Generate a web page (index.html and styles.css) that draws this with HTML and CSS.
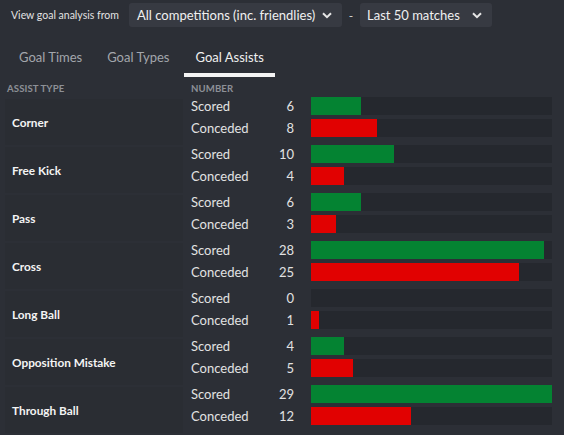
FILE: index.html
```html
<!DOCTYPE html>
<html>
<head>
<meta charset="utf-8">
<link rel="stylesheet" href="styles.css">
</head>
<body>
<div class="topbar">
  <span class="view-label">View goal analysis from</span>
  <div class="dropdown dd-comp">
    <span>All competitions (inc. friendlies)</span>
    <svg class="chev" viewBox="0 0 10 7" width="10" height="7"><path d="M1 1.2 L5 5.2 L9 1.2" fill="none" stroke="#e6e6e6" stroke-width="2"/></svg>
  </div>
  <span class="dash">-</span>
  <div class="dropdown dd-range">
    <span>Last 50 matches</span>
    <svg class="chev" viewBox="0 0 10 7" width="10" height="7"><path d="M1 1.2 L5 5.2 L9 1.2" fill="none" stroke="#e6e6e6" stroke-width="2"/></svg>
  </div>
</div>

<div class="tabs">
  <div class="tab">Goal Times</div>
  <div class="tab">Goal Types</div>
  <div class="tab active">Goal Assists</div>
</div>

<div class="table">
  <div class="thead">
    <div class="th th-type">ASSIST TYPE</div>
    <div class="th th-num">NUMBER</div>
  </div>

  <div class="group">
    <div class="gname">Corner</div>
    <div class="rname r1">Scored</div><div class="rnum r1">6</div><div class="track r1"><div class="bar green" style="width:50px"></div></div>
    <div class="rname r2">Conceded</div><div class="rnum r2">8</div><div class="track r2"><div class="bar red" style="width:66px"></div></div>
  </div>
  <div class="group">
    <div class="gname">Free Kick</div>
    <div class="rname r1">Scored</div><div class="rnum r1">10</div><div class="track r1"><div class="bar green" style="width:83px"></div></div>
    <div class="rname r2">Conceded</div><div class="rnum r2">4</div><div class="track r2"><div class="bar red" style="width:33px"></div></div>
  </div>
  <div class="group">
    <div class="gname">Pass</div>
    <div class="rname r1">Scored</div><div class="rnum r1">6</div><div class="track r1"><div class="bar green" style="width:50px"></div></div>
    <div class="rname r2">Conceded</div><div class="rnum r2">3</div><div class="track r2"><div class="bar red" style="width:25px"></div></div>
  </div>
  <div class="group">
    <div class="gname">Cross</div>
    <div class="rname r1">Scored</div><div class="rnum r1">28</div><div class="track r1"><div class="bar green" style="width:233px"></div></div>
    <div class="rname r2">Conceded</div><div class="rnum r2">25</div><div class="track r2"><div class="bar red" style="width:208px"></div></div>
  </div>
  <div class="group">
    <div class="gname">Long Ball</div>
    <div class="rname r1">Scored</div><div class="rnum r1">0</div><div class="track r1"></div>
    <div class="rname r2">Conceded</div><div class="rnum r2">1</div><div class="track r2"><div class="bar red" style="width:8px"></div></div>
  </div>
  <div class="group">
    <div class="gname">Opposition Mistake</div>
    <div class="rname r1">Scored</div><div class="rnum r1">4</div><div class="track r1"><div class="bar green" style="width:33px"></div></div>
    <div class="rname r2">Conceded</div><div class="rnum r2">5</div><div class="track r2"><div class="bar red" style="width:42px"></div></div>
  </div>
  <div class="group">
    <div class="gname">Through Ball</div>
    <div class="rname r1">Scored</div><div class="rnum r1">29</div><div class="track r1"><div class="bar green" style="width:241px"></div></div>
    <div class="rname r2">Conceded</div><div class="rnum r2">12</div><div class="track r2"><div class="bar red" style="width:100px"></div></div>
  </div>
</div>
</body>
</html>
```

FILE: styles.css
```css
html, body {
  margin: 0;
  padding: 0;
}
body {
  width: 564px;
  height: 435px;
  overflow: hidden;
  background: #2c2f36;
  font-family: "Lato", "Open Sans", sans-serif;
  color: #e4e4e4;
}

.topbar {
  display: flex;
  align-items: center;
  height: 24px;
  padding: 3px 0 3px 11px;
}
.view-label {
  font-size: 10.5px;
  color: #e2e2e2;
  width: 118px;
  white-space: nowrap;
}
.dropdown {
  display: flex;
  align-items: center;
  height: 24px;
  background: #373a42;
  border-radius: 3px;
  font-size: 13px;
  color: #f0f0f0;
  white-space: nowrap;
  box-sizing: border-box;
}
.dd-comp {
  width: 213px;
  padding-left: 8px;
}
.dd-range {
  width: 132px;
  padding-left: 7px;
}
.chev {
  margin-left: auto;
  margin-right: 10px;
}
.dash {
  width: 18px;
  text-align: center;
  font-size: 12px;
  color: #d8d8d8;
}

.tabs {
  display: flex;
  height: 47px;
  padding-left: 7px;
  box-sizing: border-box;
}
.tab {
  box-sizing: border-box;
  padding: 19px 12px 0;
  font-size: 13px;
  color: #a3a6ac;
  height: 47px;
  margin-right: 1px;
}
.tab.active {
  color: #f0f0f0;
  border-bottom: 4px solid #f4f4f4;
  padding-left: 12px;
  padding-right: 11px;
  margin-left: 1px;
}

.table {
  margin-top: 3px;
}
.thead {
  display: flex;
  height: 17px;
  align-items: center;
}
.th {
  font-size: 9.6px;
  font-weight: 700;
  color: #8d9097;
  letter-spacing: 0.1px;
}
.th-type {
  width: 184px;
  padding-left: 7px;
}

.group {
  display: grid;
  grid-template-columns: 191px 103px 17px 241px;
  grid-template-rows: 18px 18px;
  row-gap: 4px;
  padding: 0 0 8px;
  height: 48px;
  box-sizing: border-box;
  align-items: center;
}
.gname {
  grid-column: 1;
  grid-row: 1 / 3;
  align-self: stretch;
  display: flex;
  align-items: center;
  margin: 2px 8px -8px 5px;
  padding-left: 7px;
  background: #2a2d33;
  font-size: 11.8px;
  font-weight: 700;
  color: #f4f4f4;
}
.rname {
  grid-column: 2;
  font-size: 13px;
  color: #e2e2e2;
  line-height: 18px;
}
.rnum {
  grid-column: 2;
  justify-self: end;
  font-size: 13px;
  color: #e2e2e2;
  line-height: 18px;
}
.r1 { grid-row: 1; }
.r2 { grid-row: 2; }
.track {
  grid-column: 4;
  height: 18px;
  background: #25282e;
  display: flex;
}
.bar {
  height: 100%;
}
.green { background: #048332; }
.red { background: #e10101; }
```
